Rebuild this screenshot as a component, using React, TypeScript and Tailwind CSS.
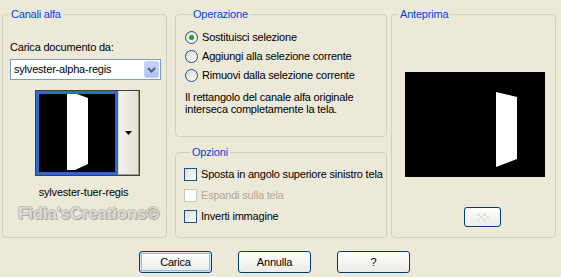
import React from "react";

const font = { fontFamily: '"Liberation Sans", Arial, sans-serif' };

function Group({ title, className, children }: { title: string; className?: string; children?: React.ReactNode }) {
  return (
    <fieldset className={"border border-[#d0d0bf] rounded-[4px] min-w-0 " + (className ?? "")}>
      <legend className="ml-[6px] px-[2px] text-[#0046d5] text-[11px] leading-[14px]">{title}</legend>
      {children}
    </fieldset>
  );
}

function Radio({ checked, label }: { checked?: boolean; label: string }) {
  return (
    <div className="flex items-center h-[19px] gap-[4px] whitespace-nowrap">
      <span className="w-[13px] h-[13px] shrink-0 rounded-full border border-[#1c5180] bg-gradient-to-br from-[#dcd9cc] to-[#ffffff] flex items-center justify-center">
        {checked && <span className="w-[5px] h-[5px] rounded-full bg-[#21a121]" />}
      </span>
      <span>{label}</span>
    </div>
  );
}

function Check({ label, disabled }: { label: string; disabled?: boolean }) {
  return (
    <div className="flex items-center h-[21px] gap-[4px] whitespace-nowrap">
      <span
        className={
          "w-[13px] h-[13px] shrink-0 border " +
          (disabled ? "border-[#cac8bb] bg-white" : "border-[#1c5180] bg-gradient-to-br from-[#dcdbd3] to-[#ffffff]")
        }
      />
      <span className={disabled ? "text-[#aca899]" : ""}>{label}</span>
    </div>
  );
}

function XPButton({ children, def, className }: { children?: React.ReactNode; def?: boolean; className?: string }) {
  return (
    <div
      className={
        "h-[22px] rounded-[3px] border border-[#003c74] bg-gradient-to-b from-[#ffffff] to-[#ecebe6] flex items-center justify-center " +
        (def ? "shadow-[inset_0_0_0_1px_#cee7ff,inset_0_0_0_2px_#98b8ea] " : "") +
        (className ?? "")
      }
    >
      {children}
    </div>
  );
}

export default function App() {
  return (
    <div className="w-[561px] h-[277px] bg-[#ece9d8] text-[11px] leading-[13px] tracking-[-0.2px] text-black overflow-hidden" style={font}>
      <div className="flex pl-[2px] pt-[7px] h-[238px]">
        {/* Canali alfa */}
        <Group title="Canali alfa" className="w-[165px] h-[231px] flex flex-col">
          <div className="pl-[7px] mt-[20px]">Carica documento da:</div>
          <div className="ml-[7px] mt-[5px] w-[151px] h-[21px] border border-[#7f9db9] bg-white flex items-center">
            <span className="pl-[3px] flex-1">sylvester-alpha-regis</span>
            <span className="w-[15px] h-[17px] mr-[1px] rounded-[2px] bg-gradient-to-b from-[#c6d3f7] to-[#b0c4f0] border border-[#c3d3fd] flex items-center justify-center">
              <svg width="9" height="6" viewBox="0 0 9 6">
                <path d="M1 1 L4.5 4.5 L8 1" fill="none" stroke="#4d6185" strokeWidth="2" />
              </svg>
            </span>
          </div>
          <div className="ml-[32px] mt-[10px] w-[105px] h-[86px] border border-[#404040] bg-white flex">
            <div className="w-[82px] h-[84px] border-[3px] border-[#316ac5] bg-black">
              <svg width="76" height="78" viewBox="0 0 76 78">
                <polygon points="28,0 38,0 49,4 49,70 36,76 28,76" fill="#fff" />
              </svg>
            </div>
            <div className="flex-1 border-l border-[#d8d6c9] bg-gradient-to-r from-[#f3f2ec] to-[#e3e1d5] flex items-center justify-center border-r border-b border-r-[#9e9c8f] border-b-[#9e9c8f]">
              <svg width="7" height="4" viewBox="0 0 7 4">
                <polygon points="0,0 7,0 3.5,4" fill="#000" />
              </svg>
            </div>
          </div>
          <div className="mt-[10px] text-center pr-[2px]">sylvester-tuer-regis</div>
          <div
            className="mt-[5px] ml-[15px] text-[17px] leading-[20px] font-bold text-[#dcdad2] tracking-[-0.2px]"
            style={{ textShadow: "1px 1px 0 #a9a7a0, -1px 0 0 #c0beb6, 0 -1px 0 #c0beb6" }}
          >
            Fidia'sCreations©
          </div>
        </Group>

        {/* middle column */}
        <div className="ml-[8px] w-[212px] flex flex-col">
          <Group title="Operazione" className="h-[130px] pl-[9px]">
            <div className="mt-[7px]">
              <Radio checked label="Sostituisci selezione" />
              <Radio label="Aggiungi alla selezione corrente" />
              <Radio label="Rimuovi dalla selezione corrente" />
            </div>
            <div className="mt-[6px] leading-[12px] whitespace-nowrap">
              Il rettangolo del canale alfa originale
              <br />
              interseca completamente la tela.
            </div>
          </Group>
          <Group title="Opzioni" className="mt-[8px] h-[93px] pl-[8px]">
            <div className="mt-[5px]">
              <Check label="Sposta in angolo superiore sinistro tela" />
              <Check disabled label="Espandi sulla tela" />
              <Check label="Inverti immagine" />
            </div>
          </Group>
        </div>

        {/* Anteprima */}
        <Group title="Anteprima" className="ml-[4px] w-[165px] h-[231px] flex flex-col">
          <div className="ml-[13px] mt-[51px] w-[140px] h-[105px] bg-black">
            <svg width="140" height="105" viewBox="0 0 140 105">
              <polygon points="91,20 112,25 112,87 91,95" fill="#fff" />
            </svg>
          </div>
          <div className="ml-[72px] mt-[30px] w-[37px] h-[20px] rounded-[3px] border border-[#003c74] bg-gradient-to-b from-[#ffffff] to-[#ecebe6] flex items-center justify-center">
            <div className="grid grid-cols-4 w-[12px] h-[9px]">
              <span className="bg-[#e4e3dc]" />
              <span />
              <span className="bg-[#e4e3dc]" />
              <span />
              <span />
              <span className="bg-[#e4e3dc]" />
              <span />
              <span className="bg-[#e4e3dc]" />
              <span className="bg-[#e4e3dc]" />
              <span />
              <span className="bg-[#e4e3dc]" />
              <span />
            </div>
          </div>
        </Group>
      </div>

      <div className="flex pl-[139px] mt-[13px] gap-[26px]">
        <XPButton def className="w-[73px]">Carica</XPButton>
        <XPButton className="w-[73px]">Annulla</XPButton>
        <XPButton className="w-[73px]">?</XPButton>
      </div>
    </div>
  );
}
